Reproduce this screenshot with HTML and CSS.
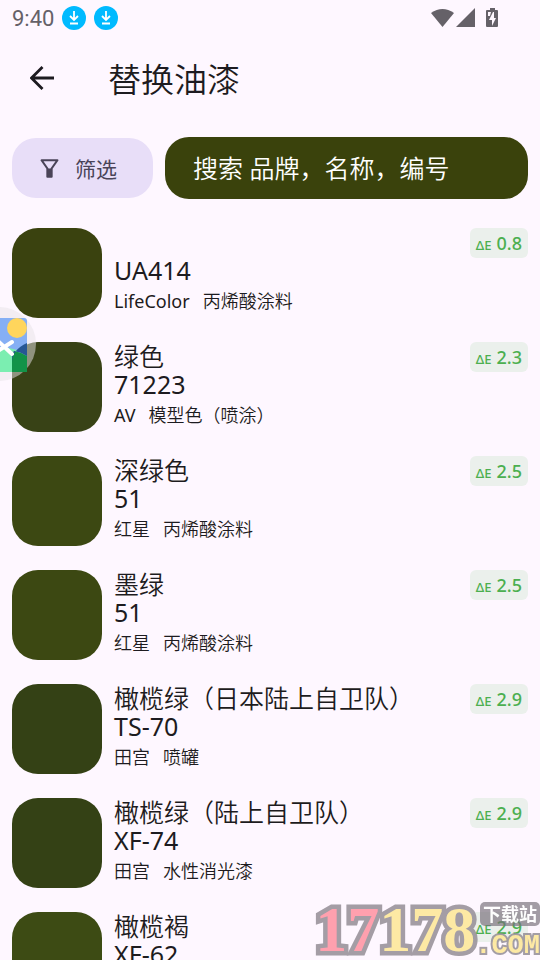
FILE: index.html
```html
<!DOCTYPE html>
<html lang="zh-CN">
<head>
<meta charset="utf-8">
<meta name="viewport" content="width=device-width, initial-scale=1">
<title>替换油漆</title>
<link rel="stylesheet" href="styles.css">
</head>
<body>
<div class="app">
  <div class="status">
    <span class="clock">9:40</span>
    <svg class="download" viewBox="0 0 24 24" aria-hidden="true"><circle cx="12" cy="12" r="12" fill="#00baff"/><path d="M12 5v9M8 10l4 4 4-4M8 17.500h8" fill="none" stroke="#fff" stroke-width="1.800"/></svg>
    <svg class="download" viewBox="0 0 24 24" aria-hidden="true"><circle cx="12" cy="12" r="12" fill="#00baff"/><path d="M12 5v9M8 10l4 4 4-4M8 17.500h8" fill="none" stroke="#fff" stroke-width="1.800"/></svg>
    <svg class="signals" viewBox="0 0 68 20" aria-hidden="true">
      <path d="M1 5Q12.500-3 24 5L12.500 19z"/>
      <path d="M45 0v19H26z"/>
      <path fill-rule="evenodd" d="M60 0h5v2h2q1 0 1 1v15q0 1-1 1H57q-1 0-1-1V3q0-1 1-1h3zM58 4v4h2l1-4zM63 4l-4 8h3v6l4-8h-2V4z"/>
    </svg>
  </div>

  <header class="bar">
    <button class="back" type="button" aria-label="返回">
      <svg viewBox="0 0 24 24" aria-hidden="true"><path d="M24 12H2M12.500 1L1.500 12l11 11" fill="none" stroke="currentColor" stroke-width="2.800"/></svg>
    </button>
    <h1>替换油漆</h1>
  </header>

  <div class="tools">
    <button class="filter" type="button">
      <svg viewBox="0 0 18 18" aria-hidden="true"><path d="M1.500 1.200h15L11 9v7.800H7V9z" fill="none" stroke="currentColor" stroke-width="2" stroke-linejoin="round"/><path d="M7 9h4v8H7z" fill="currentColor"/></svg>
      筛选
    </button>
    <input class="search" type="search" aria-label="搜索" placeholder="搜索 品牌，名称，编号">
  </div>

  <ul class="list">
    <li class="paint">
      <span class="swatch swatch-a"></span>
      <div class="info"><p class="name"></p><p class="name latin">UA414</p><p class="meta"><span class="latin">LifeColor</span><span>丙烯酸涂料</span></p></div>
      <span class="delta"><small>ΔE</small>0.8</span>
    </li>
    <li class="paint">
      <span class="swatch swatch-b"></span>
      <div class="info"><p class="name">绿色</p><p class="name latin">71223</p><p class="meta"><span class="latin">AV</span><span>模型色（喷涂）</span></p></div>
      <span class="delta"><small>ΔE</small>2.3</span>
    </li>
    <li class="paint">
      <span class="swatch swatch-c"></span>
      <div class="info"><p class="name">深绿色</p><p class="name latin">51</p><p class="meta"><span>红星</span><span>丙烯酸涂料</span></p></div>
      <span class="delta"><small>ΔE</small>2.5</span>
    </li>
    <li class="paint">
      <span class="swatch swatch-c"></span>
      <div class="info"><p class="name">墨绿</p><p class="name latin">51</p><p class="meta"><span>红星</span><span>丙烯酸涂料</span></p></div>
      <span class="delta"><small>ΔE</small>2.5</span>
    </li>
    <li class="paint">
      <span class="swatch swatch-d"></span>
      <div class="info"><p class="name">橄榄绿（日本陆上自卫队）</p><p class="name latin">TS-70</p><p class="meta"><span>田宫</span><span>喷罐</span></p></div>
      <span class="delta"><small>ΔE</small>2.9</span>
    </li>
    <li class="paint">
      <span class="swatch swatch-d"></span>
      <div class="info"><p class="name">橄榄绿（陆上自卫队）</p><p class="name latin">XF-74</p><p class="meta"><span>田宫</span><span>水性消光漆</span></p></div>
      <span class="delta"><small>ΔE</small>2.9</span>
    </li>
    <li class="paint">
      <span class="swatch swatch-e"></span>
      <div class="info"><p class="name">橄榄褐</p><p class="name latin">XF-62</p></div>
      <span class="delta"><small>ΔE</small>2.9</span>
    </li>
  </ul>
</div>

<svg class="bubble" viewBox="0 0 38 76" aria-hidden="true">
  <circle cx="-1" cy="38" r="37" fill="#e8e4e8" fill-opacity=".5"/>
  <path d="M0 12h24q3 0 3 3v51H0z" fill="#3c86f5" fill-opacity=".6"/>
  <path d="M0 42q14-2 27 8v16H0z" fill="#7beeb1"/>
  <path d="M12 66V52q0-4 2-7 7 1 13 5v16z" fill="#129348"/>
  <path d="M12 66V56q0-12 15-19v13q-6-4-13-5-2 4-2 7z" fill="#275794"/>
  <circle cx="17" cy="22" r="10" fill="#ffd55c"/>
  <path d="M-2 35l14 13M12 36L-2 45" stroke="#fff" stroke-width="4" stroke-linecap="round" fill="none"/>
</svg>

<div class="mark">
  <span class="digits"><span class="red">17</span>178</span>
  <span class="side"><span class="plate">下载站</span><span class="com">.COM</span></span>
</div>
</body>
</html>
```

FILE: styles.css
```css
* { box-sizing: border-box; }

body {
  margin: 0;
  background: #fef7ff;
  color: #1d1b20;
  font-family: "Noto Sans", "Noto Sans CJK SC", sans-serif;
}

h1, p, ul { margin: 0; padding: 0; }

button, input { border: 0; font: inherit; }

.app {
  display: flex;
  flex-direction: column;
  height: 100vh;
  overflow: hidden;
}

.status {
  display: flex;
  align-items: center;
  gap: 8px;
  height: 36px;
  padding: 0 42px 0 12px;
  color: #656168;
  font-family: Roboto, sans-serif;
  font-size: 22px;
}

.download { width: 24px; height: 24px; }

.signals {
  width: 68px;
  height: 20px;
  margin-left: auto;
  fill: #656168;
}

.bar {
  display: flex;
  align-items: center;
  gap: 42px;
  height: 84px;
  padding: 0 18px;
}

.back {
  display: grid;
  place-items: center;
  width: 48px;
  height: 48px;
  padding: 0;
  background: none;
  color: inherit;
}

.back svg { width: 24px; height: 24px; }

h1 {
  font-family: "Noto Sans CJK SC", sans-serif;
  font-size: 33px;
  font-weight: 350;
  line-height: 48px;
}

.tools {
  display: flex;
  align-items: center;
  gap: 12px;
  padding: 17px 12px 0;
}

.filter {
  display: flex;
  align-items: center;
  gap: 16px;
  height: 60px;
  padding: 0 36px 0 28px;
  border-radius: 24px;
  background: #e8def8;
  color: #4a4458;
  font-size: 21px;
}

.filter svg { width: 19px; height: 19px; }

.search {
  flex: 1;
  min-width: 0;
  height: 62px;
  padding: 0 28px;
  border-radius: 24px;
  background: #3a420c;
  color: #fff;
  font-size: 25px;
  font-weight: 350;
}

.search::placeholder { color: #fff; opacity: 1; }

.list {
  display: flex;
  flex: 1;
  flex-direction: column;
  gap: 24px;
  min-height: 0;
  padding: 29px 12px 0;
  list-style: none;
  overflow: auto;
  scrollbar-width: none;
}

.paint {
  display: flex;
  flex-shrink: 0;
  align-items: flex-start;
  gap: 12px;
}

.swatch {
  flex-shrink: 0;
  width: 90px;
  height: 90px;
  border-radius: 26px;
}

.swatch-a { background: #3a420f; }
.swatch-b { background: #384216; }
.swatch-c { background: #3c4812; }
.swatch-d { background: #344115; }
.swatch-e { background: #3d4b14; }

.info { flex: 1; min-width: 0; font-weight: 350; }

.name {
  height: 28px;
  font-size: 25px;
  line-height: 28px;
  white-space: nowrap;
}

.meta {
  display: flex;
  gap: 13px;
  font-size: 18px;
  line-height: 34px;
}

.latin { font-weight: 400; }

.delta {
  display: flex;
  align-items: baseline;
  gap: 5px;
  height: 30px;
  padding: 0 6px;
  border-radius: 6px;
  background: #ebf0ec;
  color: #4caf50;
  font-size: 18px;
  font-weight: 500;
  line-height: 30px;
}

.delta small { font-size: 13px; line-height: 1; }

.bubble {
  position: fixed;
  top: 306px;
  left: 0;
  width: 38px;
  height: 76px;
}

.mark {
  position: fixed;
  right: 0;
  bottom: 0;
  display: flex;
  align-items: flex-end;
  color: #fde794;
  font-weight: 700;
  opacity: .85;
}

.digits {
  font-family: "Liberation Serif", serif;
  font-size: 64px;
  line-height: 60px;
  paint-order: stroke fill;
  -webkit-text-stroke: 9px #948d96;
}

.red { color: #ff91a0; }

.side {
  display: flex;
  flex-direction: column;
  align-items: flex-end;
}

.plate {
  padding: 0 3px;
  border-radius: 5px;
  background: rgb(120 113 122 / 80%);
  color: #fff;
  font-size: 18px;
  line-height: 24px;
}

.com {
  font-family: "Liberation Mono", monospace;
  font-size: 27px;
  line-height: 1;
  padding-top: 7px;
  paint-order: stroke fill;
  -webkit-text-stroke: 4px #948d96;
}
```
